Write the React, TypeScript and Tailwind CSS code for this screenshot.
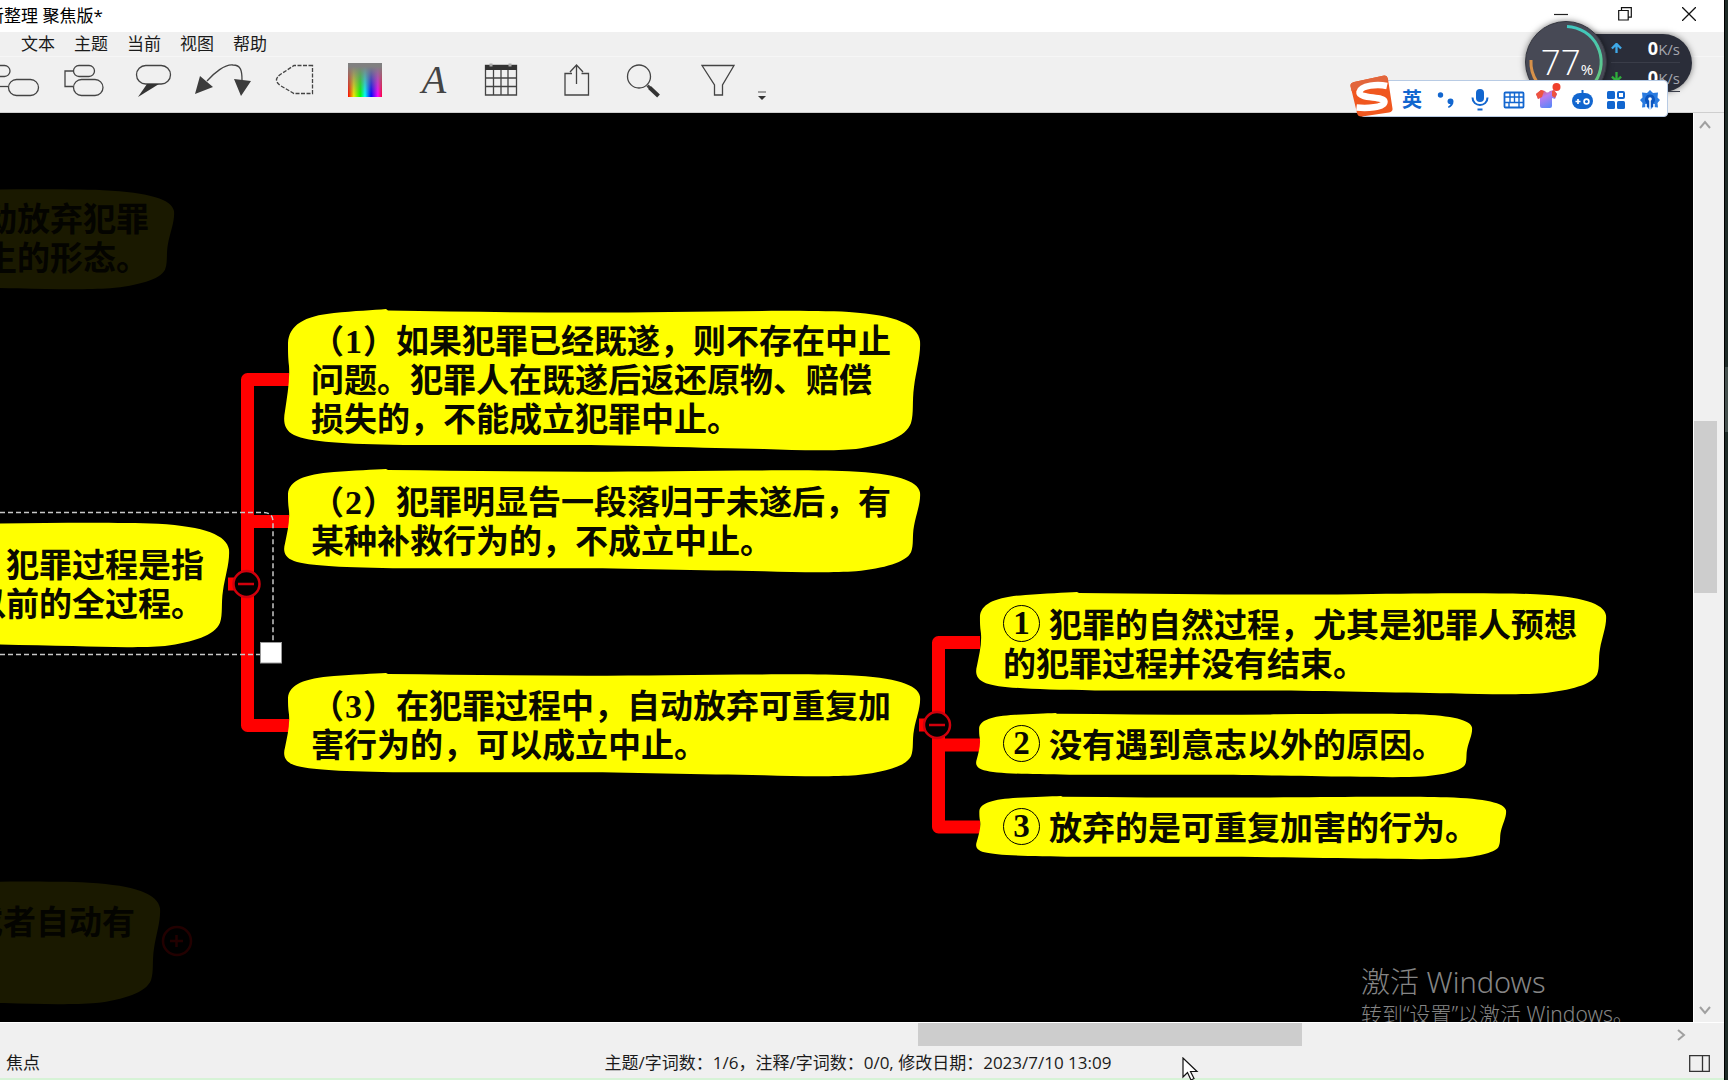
import React from "react";

const SANS = "font-['Open_Sans','Noto_Sans_CJK_SC',sans-serif]";

const menus = ["文本", "主题", "当前", "视图", "帮助"];

function Tool({ label, x, w, children }: { label: string; x: number; w: number; children: React.ReactNode }) {
  return (
    <button type="button" aria-label={label} className="shrink-0">
      <svg width={w} height={40} viewBox={`${x} 60 ${w} 40`} fill="none" stroke="#444" strokeWidth={1.3}>
        {children}
      </svg>
    </button>
  );
}

function TitleBar() {
  return (
    <header className="flex h-8 shrink-0 items-center justify-between overflow-hidden bg-white">
      <h1 className="-ml-[13px] whitespace-pre text-[17px] leading-8 text-black">新整理 聚焦版*</h1>
      <div className="flex items-center pb-1 pr-[3px]">
        <button type="button" aria-label="最小化" className="flex h-7 w-16 items-center justify-center">
          <svg width="14" height="14" viewBox="0 0 14 14" stroke="#222" strokeWidth="1.2"><path d="M0 7.500h14" /></svg>
        </button>
        <button type="button" aria-label="还原" className="flex h-7 w-16 items-center justify-center">
          <svg width="14" height="14" viewBox="0 0 14 14" fill="none" stroke="#111" strokeWidth="1.2">
            <path d="M.7 3.5h9.5v9.5H.7zM3.5 3.5V.7h9.8v9.5h-3" />
          </svg>
        </button>
        <button type="button" aria-label="关闭" className="flex h-7 w-16 items-center justify-center">
          <svg width="14" height="14" viewBox="0 0 14 14" stroke="#111" strokeWidth="1.3"><path d="M0 0l14 14M14 0L0 14" /></svg>
        </button>
      </div>
    </header>
  );
}

function MenuBar() {
  return (
    <nav className="flex h-[25px] shrink-0 items-end gap-[19px] border-b border-[#f6f6f6] pl-[21px]">
      {menus.map((m) => (
        <button key={m} type="button" className="text-[17px] leading-6 text-[#1a1a1a]">{m}</button>
      ))}
    </nav>
  );
}

function ToolBar() {
  return (
    <div className="flex h-14 shrink-0 items-start border-b border-[#cfcfcf] pt-[3px]">
      <Tool label="浮动主题" x={0} w={52}>
        <rect x={-12} y={65.5} width={22} height={11} rx={5.5} />
        <rect x={8.5} y={79.5} width={30} height={16} rx={8} />
        <path d="M0 86.5h8" />
      </Tool>
      <Tool label="子主题" x={52} w={68}>
        <rect x={73.5} y={65.5} width={21} height={11} rx={5.5} />
        <rect x={73.5} y={79.5} width={29.5} height={16} rx={8} />
        <path d="M73 71h-8v15.500h8" />
      </Tool>
      <Tool label="标注" x={120} w={64}>
        <rect x={136.500} y={65.500} width={34} height={18.500} rx={9.250} />
        <path d="M138 97l9-13h12z" fill="#333" stroke="none" />
      </Tool>
      <Tool label="关系" x={184} w={78}>
        <path d="M207 81C214 73 225 64 233 65c8 0 9 6 9 15" />
        <path d="M200 76l13 11-18 7zM234 79l17 2-10 15z" fill="#3c3c3c" stroke="none" />
      </Tool>
      <Tool label="边界" x={262} w={68}>
        <path d="M312.500 65.500H294L281 74q-9 6 0 12l13 7.500h18.500z" strokeDasharray="4 1.500" />
      </Tool>
      <Tool label="颜色" x={330} w={72}>
        <defs>
          <linearGradient id="hue">
            <stop offset="0" stopColor="#f00" />
            <stop offset=".17" stopColor="#ee0" />
            <stop offset=".36" stopColor="#0f0" />
            <stop offset=".5" stopColor="#0ff" />
            <stop offset=".68" stopColor="#00f" />
            <stop offset=".88" stopColor="#f0f" />
            <stop offset="1" stopColor="#f03" />
          </linearGradient>
          <linearGradient id="fade" x2="0" y2="1">
            <stop offset=".1" stopColor="#808080" />
            <stop offset="1" stopColor="#808080" stopOpacity="0" />
          </linearGradient>
        </defs>
        <rect x={348} y={63} width={34} height={34} fill="url(#hue)" stroke="none" />
        <rect x={348} y={63} width={34} height={34} fill="url(#fade)" stroke="none" />
      </Tool>
      <button type="button" aria-label="字体" className="flex h-10 w-16 shrink-0 items-center justify-center font-['Liberation_Serif',serif] text-[40px] italic leading-10 text-[#444]">
        A
      </button>
      <Tool label="表格" x={466} w={68}>
        <path d="M485.500 65.500h31v29.500h-31zM485 78h31M485 86.500h31M493.500 69v26M501 69v26M508 69v26" />
        <path d="M485 65h32v5h-32z" fill="#333" stroke="none" />
        <path d="M489.500 63.500h3v3h-3zM508.500 63.500h3v3h-3z" fill="#aaa" stroke="none" />
      </Tool>
      <Tool label="分享" x={534} w={76}>
        <path d="M572 73.500h-7v21.500h23.500V73.500h-7M576.500 84V65.500M570 72l6.500-7 6.500 7" />
      </Tool>
      <Tool label="搜索" x={610} w={70}>
        <circle cx={639} cy={76.500} r={11.500} />
        <path d="M647.500 85.500l3 3" strokeWidth={3} />
        <path d="M649.500 87.500l9 8.500" strokeWidth={4} stroke="#333" />
      </Tool>
      <Tool label="筛选" x={680} w={70}>
        <path d="M702 65.500h32L722.500 85v10h-8V85z" />
      </Tool>
      <Tool label="更多工具" x={750} w={24}>
        <path d="M758 92h8" stroke="#777" />
        <path d="M758 96h8l-4 4z" fill="#333" stroke="none" />
      </Tool>
    </div>
  );
}

function Blob({ className }: { className: string }) {
  return (
    <svg className={"absolute inset-0 h-full w-full overflow-visible " + className} viewBox="0 0 636 141" preserveAspectRatio="none" fill="currentColor" aria-hidden="true">
      <path d="M4 34C5 16 20 7 50 4C70 2 90 1 102 0L104 1.500C200 3 290 4.500 386 3C450 2 520 1 565 3C612 6 634 16 636 32C637 46 632 62 630 78C628 92 630 104 627 114C622 128 600 136 572 140C550 142 515 141.500 480 140C420 139 340 136 285 136L120 136C60 135 25 133 10 126C0 121-1 112 1 102C3 88 6 72 5 57C4 48 4 42 4 34Z" />
    </svg>
  );
}

function Num({ n }: { n: string }) {
  return <span className="px-px font-['Liberation_Serif',serif] text-[34px] leading-none">{n}</span>;
}

function Ring({ n }: { n: string }) {
  return (
    <span className="mr-[9px] inline-flex h-[37px] w-[37px] items-center justify-center rounded-full border border-black align-top font-['Liberation_Serif',serif] leading-none">
      {n}
    </span>
  );
}

function Topic({ place, children, left = false, dim = false }: { place: string; children: React.ReactNode; left?: boolean; dim?: boolean }) {
  return (
    <div className={"absolute " + place}>
      <Blob className={dim ? "text-[#1a1900]" : "text-[#ffff00]"} />
      <div
        className={
          "relative whitespace-pre text-[33px] font-bold leading-[39px] " +
          (left ? "pr-[25px] text-right " : "pl-[27px] ") +
          (dim ? "text-[#040400]" : "text-[#0a0a00]")
        }
      >
        {children}
      </div>
    </div>
  );
}

function Canvas() {
  return (
    <main className="relative min-w-0 flex-1 overflow-hidden bg-black">
      <svg className="absolute left-0 top-0" width="1693" height="908" viewBox="0 113 1693 908" fill="none" aria-hidden="true">
        <g stroke="#ff0000" strokeWidth="13" strokeLinejoin="round">
          <path d="M289 379.500H247.500V725.500H289M247.500 521.500H289M228 584H240" />
          <path d="M980 642.500H938.500V827H980M938.500 745H980M919 725H930" />
        </g>
      </svg>

      <Topic place="left-[-462px] top-[75px] h-[101px] w-[636px] pt-[11px]" left dim>{"动放弃犯罪\n生的形态。"}</Topic>
      <Topic place="left-[-407px] top-[408px] h-[126px] w-[636px] pt-6" left>{"犯罪过程是指\n以前的全过程。"}</Topic>
      <Topic place="left-[-476px] top-[767px] h-[124px] w-[636px] pt-[22px]" left dim>或者自动有</Topic>

      <Topic place="left-[284px] top-[196px] h-[141px] w-[636px] pt-3">
        （<Num n="1" />）如果犯罪已经既遂，则不存在中止{"\n"}问题。犯罪人在既遂后返还原物、赔偿{"\n"}损失的，不能成立犯罪中止。
      </Topic>
      <Topic place="left-[284px] top-[356px] h-[103px] w-[636px] pt-[13px]">
        （<Num n="2" />）犯罪明显告一段落归于未遂后，有{"\n"}某种补救行为的，不成立中止。
      </Topic>
      <Topic place="left-[284px] top-[560px] h-[103px] w-[636px] pt-[13px]">
        （<Num n="3" />）在犯罪过程中，自动放弃可重复加{"\n"}害行为的，可以成立中止。
      </Topic>
      <Topic place="left-[976px] top-[479px] h-[102px] w-[630px] pt-[13px]">
        <Ring n="1" />犯罪的自然过程，尤其是犯罪人预想{"\n"}的犯罪过程并没有结束。
      </Topic>
      <Topic place="left-[976px] top-[600px] h-[64px] w-[496px] pt-3">
        <Ring n="2" />没有遇到意志以外的原因。
      </Topic>
      <Topic place="left-[976px] top-[683px] h-[63px] w-[530px] pt-3">
        <Ring n="3" />放弃的是可重复加害的行为。
      </Topic>

      <svg className="absolute left-0 top-0" width="1693" height="908" viewBox="0 113 1693 908" fill="none" aria-hidden="true">
        <g fill="#000" stroke="#d0000c" strokeWidth="2.500">
          <circle cx="246.500" cy="584" r="13" />
          <path d="M238 584h16" />
          <circle cx="937" cy="725" r="13" />
          <path d="M929 725h16" />
        </g>
        <g stroke="#220000" strokeWidth="2.500">
          <circle cx="177" cy="941" r="14" />
          <path d="M170 941h13M176.500 935v12" />
        </g>
        <path d="M0 512.500H264Q273 513 273 522V643M0 654.500H260" stroke="#c8c8c8" strokeWidth="1.500" strokeDasharray="5 3" />
        <rect x="260.500" y="642.500" width="21" height="20.500" fill="#fff" stroke="#999" />
      </svg>

      <div className="absolute right-12 top-[849px] w-[284px] whitespace-pre text-[#858585]">
        <p className="font-['Noto_Sans','Noto_Sans_CJK_SC',sans-serif] text-[29px] font-light leading-10">激活 Windows</p>
        <p className="font-['Noto_Sans','Noto_Sans_CJK_SC',sans-serif] text-[21px] font-light leading-6">转到“设置”以激活 Windows。</p>
      </div>
    </main>
  );
}

function Chevron({ d }: { d: string }) {
  return (
    <svg width="12" height="12" viewBox="0 0 12 12" fill="none" stroke="#a0a0a0" strokeWidth="2"><path d={d} /></svg>
  );
}

function Workspace() {
  return (
    <div className="flex min-h-0 flex-1">
      <Canvas />
      <div className="flex w-[31px] shrink-0 flex-col border-l border-white">
        <button type="button" aria-label="向上滚动" className="flex h-6 w-[22px] items-center justify-center"><Chevron d="M1 9l5-6 5 6" /></button>
        <div className="min-h-0 flex-1">
          <div className="h-[33%]" />
          <div className="h-[20%] w-[23px] bg-[#cdcdcd]" />
        </div>
        <button type="button" aria-label="向下滚动" className="flex h-6 w-[22px] items-center justify-center"><Chevron d="M1 3l5 6 5-6" /></button>
      </div>
    </div>
  );
}

function BottomBars() {
  return (
    <footer className="relative shrink-0">
      <div className="flex h-6 items-stretch border-t border-white pr-[31px]">
        <div className="flex flex-1">
          <div className="w-[55%]" />
          <div className="w-[23%] bg-[#cdcdcd]" />
        </div>
        <button type="button" aria-label="向右滚动" className="flex w-6 items-center justify-center"><Chevron d="M3 1l6 5-6 5" /></button>
      </div>
      <div className="grid h-8 grid-cols-[1fr_auto_1fr] items-center pl-1.5 pr-3.5 pt-0.5 text-[17px] leading-7 text-[#1a1a1a]">
        <span>焦点</span>
        <span className="whitespace-pre">主题/字词数：1/6，注释/字词数：0/0, 修改日期：2023/7/10 13:09</span>
        <button type="button" aria-label="侧边栏" className="justify-self-end">
          <svg width="21" height="17" viewBox="0 0 21 17" fill="none" stroke="#333" strokeWidth="1.300"><path d="M.7.700h19.600v15.600H.7zM13.500.700v15.600" /></svg>
        </button>
      </div>
      <div className="h-0.5 bg-[#d6f3d6]" />
      <svg className="absolute left-[1182px] top-[35px]" width="18" height="23" viewBox="0 0 18 23" aria-hidden="true">
        <path d="M1 1v19l4.500-4.500L9 23l3-1.500-3.500-7H15z" fill="#fff" stroke="#111" strokeWidth="1.200" />
      </svg>
    </footer>
  );
}

function SpeedBall() {
  return (
    <div className="absolute right-9 top-[21px] flex h-[82px] w-[167px] items-center">
      <div className="absolute right-0 top-[13px] flex h-[58px] w-[126px] flex-col rounded-r-full bg-[#2a2d39] pl-[45px] pr-3 shadow-[0_0_6px_rgba(0,0,0,0.5)]">
        {[
          { c: "#3fa9e8", d: "M1 6l5-5 5 5M6 1v10" },
          { c: "#2fae3c", d: "M1 5l5 5 5-5M6 10V0" },
        ].map((r) => (
          <div key={r.c} className="flex h-[30px] items-center justify-between border-b border-[#3a3d49]">
            <svg width="11" height="11" viewBox="0 0 12 12" fill="none" stroke={r.c} strokeWidth="2.500"><path d={r.d} /></svg>
            <span className="flex items-baseline font-['Open_Sans',sans-serif] leading-6">
              <b className="text-lg leading-6 text-white">0</b>
              <span className="text-[15px] leading-6 text-[#a4a6ae]">K/s</span>
            </span>
          </div>
        ))}
      </div>
      <div className="relative flex h-[82px] w-[82px] items-center justify-center rounded-full border border-[#34363f] bg-[#474955] shadow-[0_0_6px_rgba(0,0,0,0.5)]">
        <svg className="absolute inset-0" width="80" height="80" viewBox="0 0 80 80" fill="none" strokeWidth="3" aria-hidden="true">
          <defs>
            <linearGradient id="ring" x2="0" y2="1">
              <stop offset="0" stopColor="#3fc8c0" />
              <stop offset="1" stopColor="#68c87a" />
            </linearGradient>
          </defs>
          <path d="M41 4.500A35.500 35.500 0 0 1 69 60" stroke="url(#ring)" />
          <path d="M5 38A35.500 35.500 0 0 0 11 60" stroke="#d8924a" />
        </svg>
        <span className="relative flex items-baseline pl-0.5 text-white">
          <span className="font-['Open_Sans',sans-serif] text-[35px] font-light leading-10">77</span>
          <span className="font-['Open_Sans',sans-serif] text-[15px] leading-4">%</span>
        </span>
      </div>
    </div>
  );
}

function ImeButton({ label, children }: { label: string; children: React.ReactNode }) {
  return (
    <button type="button" aria-label={label} className="flex h-full w-[34px] items-center justify-center text-[#1266cf]">
      {children}
    </button>
  );
}

function ImeBar() {
  return (
    <div className="absolute right-[60px] top-20 flex h-[37px] w-[308px] items-center justify-end rounded-sm border border-[#b8cbe4] bg-white pt-0.5">
      <svg className="absolute -left-3 -top-1.5" width="46" height="44" viewBox="0 0 46 44" aria-hidden="true">
        <path d="M5 7Q1 8 1.500 11L8 38q1 4 5 3.500l27-4q4-1 3.500-4L39 4Q38 0 34 .700z" fill="#f0571f" />
        <path d="M5 7Q1 8 1.500 11l1 5L39 6l-.500-3Q38 0 34 .700z" fill="#e2663c" />
        <path d="M38 11C29 9 12 10 10.500 17c-1 7 25 4 25 9.500 0 6.500-19 7-28 6" fill="none" stroke="#fff" strokeWidth="6.500" />
      </svg>
      <ImeButton label="切换中英文"><span className="text-xl font-bold leading-8">英</span></ImeButton>
      <ImeButton label="中英文标点">
        <svg width="18" height="16" viewBox="0 0 18 16" fill="currentColor"><circle cx="3.500" cy="3" r="2.700" /><path d="M10.500 9.500a3 3 0 1 1 6 0c0 3-2 5.500-5 6.500l-.500-1.500c1.500-.700 2.300-1.500 2.400-2.500-1.500.300-2.900-.700-2.900-2.500z" /></svg>
      </ImeButton>
      <ImeButton label="语音">
        <svg width="18" height="23" viewBox="0 0 18 23" fill="none" stroke="currentColor" strokeWidth="2"><rect x="5" y="1" width="8" height="13" rx="4" fill="currentColor" stroke="none" /><path d="M1.500 9.500c0 10 15 10 15 0M6.500 21.500h5" /></svg>
      </ImeButton>
      <ImeButton label="软键盘">
        <svg width="22" height="18" viewBox="0 0 22 18" fill="none" stroke="currentColor" strokeWidth="1.800">
          <rect x="1.500" y="1.500" width="19" height="15" rx="1" />
          <path d="M2 6h18M2 11.500h18M7 2v10M11.500 2v10M16 2v10M6 11.500v5M16 11.500v5" strokeWidth="1.400" />
        </svg>
      </ImeButton>
      <ImeButton label="皮肤">
        <svg width="26" height="28" viewBox="0 0 26 28" className="mb-1.5">
          <defs><linearGradient id="shirt" x1="0" x2=".6" y2="1"><stop offset="0" stopColor="#f0503c" /><stop offset=".45" stopColor="#b87cf0" /><stop offset="1" stopColor="#5a86f8" /></linearGradient></defs>
          <path d="M1 11l5-4 4 1q2 3 5 0l4-1 3 4-2 5-3-1v8q0 2-2 2H7q-2 0-2-2v-8l-2 1z" fill="url(#shirt)" />
          <path d="M1 11l5-4 3 1-2 6-4 2zM17 8l2-1 3 4-2 4-3-2z" fill="#ee5340" />
          <circle cx="21.500" cy="4" r="4" fill="#f0402c" />
        </svg>
      </ImeButton>
      <ImeButton label="智能助手">
        <svg width="23" height="20" viewBox="0 0 23 20"><path d="M11.500 0v5" stroke="currentColor" strokeWidth="2" /><rect x="1" y="3" width="21" height="16" rx="8" fill="currentColor" /><path d="M4.500 11.500h5M7 9v5" stroke="#fff" strokeWidth="1.700" /><circle cx="15.500" cy="11.500" r="2.400" fill="none" stroke="#fff" strokeWidth="1.700" /></svg>
      </ImeButton>
      <ImeButton label="工具箱">
        <svg width="18" height="18" viewBox="0 0 18 18" fill="currentColor"><rect width="8" height="8" rx="1.500" /><rect y="10" width="8" height="8" rx="1.500" /><rect x="10" y="10" width="8" height="8" rx="1.500" /><rect x="11" y="1" width="6" height="6" rx="1" fill="none" stroke="currentColor" strokeWidth="2" /></svg>
      </ImeButton>
      <ImeButton label="设置">
        <svg width="20" height="20" viewBox="0 0 20 20">
          <path d="M10 0l3 3 5-.500-.500 5L20 10l-2.500 3 .500 4.500-5-.500-3 3-3-3-5 .500.500-4.500L0 10l2.500-2.500L2 2.500 7 3z" fill="#2a7be0" />
          <path d="M10 4.500a5 5 0 0 1 3 9V17h-6v-3.500a5 5 0 0 1 3-9z" fill="#0b56c0" />
          <path d="M10 10v10M6 14v4M14 14v4" stroke="#fff" strokeWidth="1.500" />
          <circle cx="10" cy="9" r="1.800" fill="#fff" />
        </svg>
      </ImeButton>
    </div>
  );
}

export default function App() {
  return (
    <div lang="zh-CN" className={"relative flex h-screen overflow-hidden bg-[#1f2b28] " + SANS}>
      <div className="flex min-w-0 flex-1 flex-col bg-[#f0f0f0]">
        <TitleBar />
        <MenuBar />
        <ToolBar />
        <Workspace />
        <BottomBars />
      </div>
      <div className="flex w-1 shrink-0 flex-col border-l border-black">
        <div className="h-[34%]" />
        <div className="h-[6%] bg-[#46524f]" />
      </div>
      <SpeedBall />
      <ImeBar />
    </div>
  );
}
